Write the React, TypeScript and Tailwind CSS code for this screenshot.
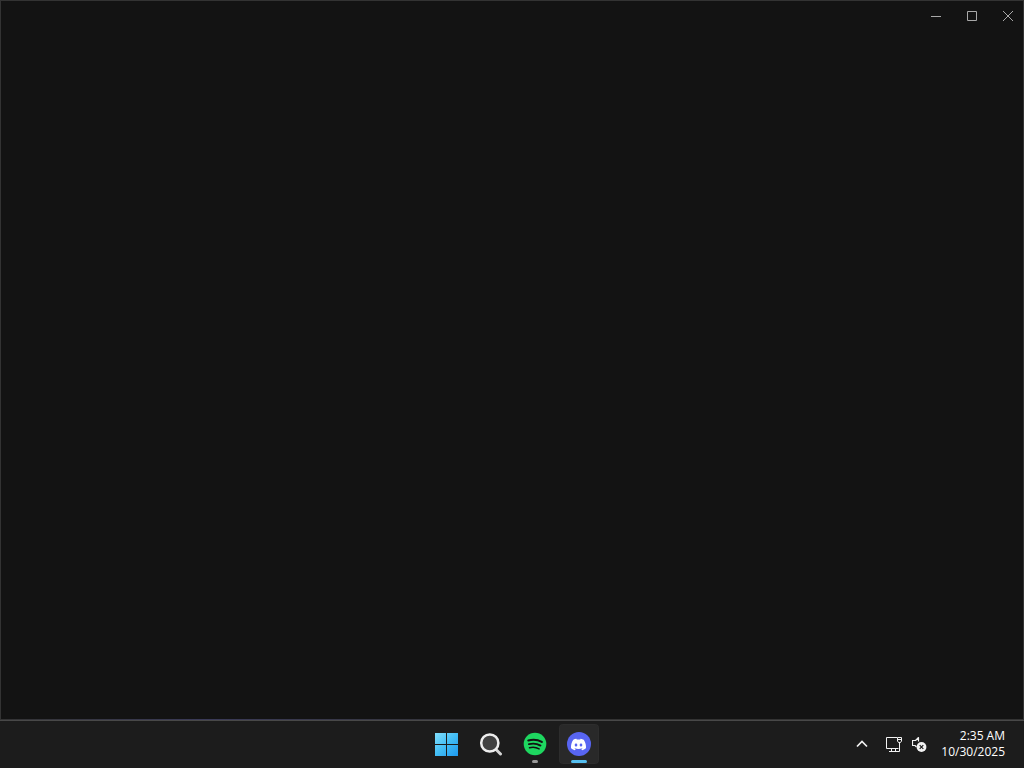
import type { ReactNode } from "react";
import { SiDiscord } from "react-icons/si";

function WindowButton({ label, children }: { label: string; children: ReactNode }) {
  return (
    <button
      type="button"
      aria-label={label}
      className="w-8 h-8 flex items-center justify-center text-[#a9a9a9] hover:bg-white/10"
    >
      <svg width="12" height="12" viewBox="0 0 12 12" fill="none" stroke="currentColor">
        {children}
      </svg>
    </button>
  );
}

type TaskButtonProps = { label: string; state?: "running" | "active"; children: ReactNode };

function TaskButton({ label, state, children }: TaskButtonProps) {
  return (
    <button
      type="button"
      aria-label={label}
      className={
        state === "active"
          ? "relative w-10 h-10 flex items-center justify-center rounded bg-[#292929] ring-1 ring-inset ring-white/2"
          : "relative w-10 h-10 flex items-center justify-center rounded hover:bg-white/5"
      }
    >
      {children}
      {state === "active" && <span className="absolute bottom-px left-3 w-4 h-[3px] rounded-full bg-[#55bff0]" />}
      {state === "running" && <span className="absolute bottom-px left-[17px] w-1.5 h-[3px] rounded-full bg-[#999999]" />}
    </button>
  );
}

function StartIcon() {
  return (
    <svg width="24" height="24" viewBox="0 0 24 24">
      <defs>
        <linearGradient id="start" x1="0" y1="0" x2="24" y2="24" gradientUnits="userSpaceOnUse">
          <stop stopColor="#84e0fb" />
          <stop offset=".5" stopColor="#42bdf5" />
          <stop offset="1" stopColor="#1c98f0" />
        </linearGradient>
      </defs>
      <path d="M0 1h11v11H0zM12 1h11v11H12zM0 13h11v11H0zM12 13h11v11H12z" fill="url(#start)" />
    </svg>
  );
}

function SearchIcon() {
  return (
    <svg width="24" height="24" viewBox="0 0 24 24" fill="none" strokeLinecap="round">
      <path d="m16.800 17.200 4.700 4.800" stroke="#d4d4d4" strokeWidth="3" />
      <circle cx="10.800" cy="11" r="8.600" fill="#414141" stroke="#ededed" strokeWidth="2.500" />
    </svg>
  );
}

function SpotifyIcon() {
  return (
    <svg width="24" height="24" viewBox="0 0 24 24" fill="none" stroke="#121212" strokeLinecap="round">
      <circle cx="12" cy="12" r="11.300" fill="#1ed760" stroke="none" />
      <path d="M5.300 8.500c4.500-1.300 9.600-.8 13.500 1.400" strokeWidth="2.100" />
      <path d="M5.900 12.200c3.900-1.100 8.200-.6 11.600 1.400" strokeWidth="1.800" />
      <path d="M6.500 15.700c3.300-.8 6.700-.5 9.600 1.200" strokeWidth="1.500" />
    </svg>
  );
}

function DiscordIcon() {
  return (
    <span className="w-6 h-6 rounded-full bg-[#5865f2] text-white flex items-center justify-center">
      <SiDiscord size={15} />
    </span>
  );
}

function NetworkIcon() {
  return (
    <svg width="16" height="17" viewBox="0 0 16 17" fill="none" stroke="#f2f2f2">
      <path d="M11 1.500H.5v11h12M3 15.500h9M5.500 12.500v3M9.500 12.500v3M13.500 6.500v9" />
      <path d="M11.500 1.500h4v3.500l-1 1.500h-2l-1-1.500zM11.500 3.500h4" />
      <path d="M12 15.500h1.500" />
    </svg>
  );
}

function MutedIcon() {
  return (
    <svg width="16" height="16" viewBox="0 0 16 16" fill="none" stroke="#f2f2f2">
      <path d="M6.500 5.500V1.500L3.500 4.500H.5v5h2.500l1.500 1.500" strokeWidth="1.200" strokeLinejoin="round" />
      <circle cx="9.500" cy="11" r="4.900" fill="#f2f2f2" stroke="none" />
      <path d="m7.700 9.200 3.600 3.600M11.300 9.200l-3.600 3.600" stroke="#1c1c1c" strokeWidth="1.200" />
    </svg>
  );
}

export default function App() {
  return (
    <div className="min-h-screen flex flex-col bg-[#1c1c1c] font-['Open_Sans','Noto_Sans',sans-serif]">
      {/* Empty app window */}
      <main className="flex-1 flex flex-col bg-[#131313] border border-b-0 border-[#333333]">
        <header className="flex justify-end gap-1 -mt-px -mr-px">
          <WindowButton label="Minimize">
            <path d="M1 6.500h10" />
          </WindowButton>
          <WindowButton label="Maximize">
            <path d="M1.500 1.500h9v9h-9z" />
          </WindowButton>
          <WindowButton label="Close">
            <path d="m1 1 10 10M11 1 1 11" />
          </WindowButton>
        </header>
      </main>
      <div className="h-px bg-linear-to-r from-[#333333] via-[#3a3a58] via-20% to-[#333333] to-50%" />
      <div className="h-px bg-[#484848]" />

      {/* Taskbar */}
      <footer className="h-[47px] pt-[3px] grid grid-cols-[1fr_auto_1fr] items-start">
        <nav aria-label="Taskbar" className="col-start-2 flex gap-1 pl-px">
          <TaskButton label="Start">
            <StartIcon />
          </TaskButton>
          <TaskButton label="Search">
            <SearchIcon />
          </TaskButton>
          <TaskButton label="Spotify" state="running">
            <SpotifyIcon />
          </TaskButton>
          <TaskButton label="Discord" state="active">
            <DiscordIcon />
          </TaskButton>
        </nav>

        <div className="flex items-center justify-end pr-[19px]">
          <button type="button" aria-label="Show hidden icons" className="w-8 h-10 flex items-center justify-center">
            <svg width="12" height="8" viewBox="0 0 12 8" fill="none" stroke="#f2f2f2" strokeWidth="1.700">
              <path d="m1 6.500 5-5 5 5" />
            </svg>
          </button>
          <button type="button" aria-label="Network and volume" className="h-10 px-2 flex items-center gap-2.5">
            <NetworkIcon />
            <MutedIcon />
          </button>
          <button type="button" className="h-10 pl-[5px] text-right text-xs leading-4 text-white">
            <time dateTime="2025-10-30T02:35" className="block">
              <span className="block">2:35 AM</span>
              <span className="block">10/30/2025</span>
            </time>
          </button>
        </div>
      </footer>
    </div>
  );
}
